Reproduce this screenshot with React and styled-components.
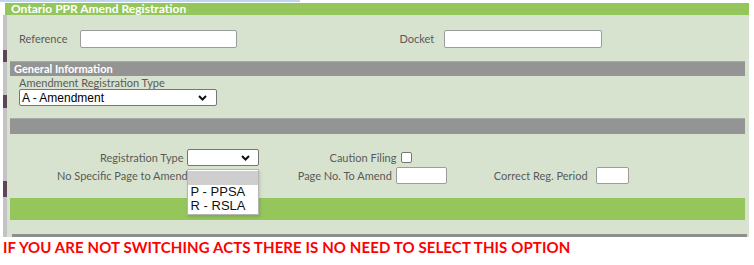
import React from 'react';
import styled, { createGlobalStyle } from 'styled-components';

const GlobalStyle = createGlobalStyle`
  body {
    margin: 0;
    background: #fff;
    font-family: Lato, "Open Sans", sans-serif;
  }
`

const Chevron = () => (
  <svg width="9" height="6" viewBox="0 0 9 6">
    <path d="M1 1 L4.5 4.5 L8 1" fill="none" stroke="#111" strokeWidth="2" />
  </svg>
)

const App = () => (
  <>
    <GlobalStyle />
    <TopLine />
    <Frame>
      <Header>Ontario PPR Amend Registration</Header>
      <Body>
        <Gutter />
        <Panel>
          <Row top="15px">
            <Field left="12px">
              <Label>Reference</Label>
              <TextInput width="157px" gap="13px" />
            </Field>
            <Field left="162px">
              <Label>Docket</Label>
              <TextInput width="158px" gap="10px" />
            </Field>
          </Row>

          <Bar top="13px">General Information</Bar>
          <Stacked>
            <Label>Amendment Registration Type</Label>
            <SelectBox width="198px">
              A - Amendment
              <Chevron />
            </SelectBox>
          </Stacked>

          <Bar top="12px" height="16px" />

          <Row top="15px">
            <Field left="93px">
              <Label>Registration Type</Label>
              <SelectWrap>
                <SelectBox width="72px" gap="3px" />
                <Chevron />
                <Popup>
                  <Option active>&nbsp;</Option>
                  <Option>P - PPSA</Option>
                  <Option>R - RSLA</Option>
                </Popup>
              </SelectWrap>
            </Field>
            <Field left="71px">
              <Label>Caution Filing</Label>
              <Check />
            </Field>
          </Row>
          <Row top="1px">
            <Field left="50px">
              <Label>No Specific Page to Amend</Label>
              <Check />
            </Field>
            <Field left="94px">
              <Label>Page No. To Amend</Label>
              <TextInput width="51px" height="17px" gap="4px" />
            </Field>
            <Field left="47px">
              <Label>Correct Reg. Period</Label>
              <TextInput width="33px" height="17px" gap="8px" />
            </Field>
          </Row>

          <GreenBar />
          <BottomLine />
        </Panel>
      </Body>
    </Frame>
    <Warning>IF YOU ARE NOT SWITCHING ACTS THERE IS NO NEED TO SELECT THIS OPTION</Warning>
  </>
);

const TopLine = styled.div`
    width: 300px;
    height: 2px;
    background: #bcd6f0;
    margin-bottom: 1px;
`
const Frame = styled.div`
    width: 746px;
    margin-left: 3px;
`
const Header = styled.div`
    margin-left: 2px;
    height: 12px;
    background: #95c65c;
    color: #fff;
    font-weight: 700;
    font-size: 12px;
    line-height: 12px;
    padding-left: 6px;
`
const Body = styled.div`
    display: flex;
`
const Gutter = styled.div`
    width: 4px;
    background: linear-gradient(
        to bottom,
        #c3c3c3 0, #c3c3c3 35px,
        #5d4655 35px, #5d4655 47px,
        #c3c3c3 47px, #c3c3c3 80px,
        #5d4655 80px, #5d4655 93px,
        #c3c3c3 93px, #c3c3c3 166px,
        #5d4655 166px, #5d4655 182px,
        #c3c3c3 182px
    );
`
const Panel = styled.div`
    flex: 1;
    background: #d8e3cf;
    padding: 0 4px 0 3px;
`
const Row = styled.div`
    display: flex;
    align-items: center;
    margin-top: ${props => props.top || '0'};
    margin-left: -3px;
`
const Field = styled.div`
    display: flex;
    align-items: center;
    margin-left: ${props => props.left || '0'};
`
const Label = styled.span`
    font-size: 11px;
    line-height: 12px;
    color: #5a5a5a;
    white-space: nowrap;
`
const TextInput = styled.div`
    box-sizing: border-box;
    width: ${props => props.width};
    height: ${props => props.height || '18px'};
    margin-left: ${props => props.gap || '0'};
    background: #fff;
    border: 1px solid #9c9c9c;
    border-radius: 2px;
`
const Bar = styled.div`
    margin-top: ${props => props.top || '0'};
    height: ${props => props.height || '15px'};
    background: #949494;
    color: #fff;
    font-size: 11px;
    font-weight: 700;
    line-height: 14px;
    padding-left: 4px;
    border-top: 1px solid #a9a9a3;
    box-sizing: border-box;
`
const Stacked = styled.div`
    display: flex;
    flex-direction: column;
    align-items: flex-start;
    padding-left: 9px;
    padding-top: 1px;
`
const SelectBox = styled.div`
    box-sizing: border-box;
    display: flex;
    align-items: center;
    justify-content: space-between;
    width: ${props => props.width};
    height: 17px;
    margin-left: ${props => props.gap || '0'};
    padding: 0 9px 0 2px;
    background: #fff;
    border: 1px solid #767676;
    border-radius: 2px;
    font-family: "Liberation Sans", Arial, sans-serif;
    font-size: 12px;
    color: #000;
`
const SelectWrap = styled.div`
    position: relative;
    display: flex;
    align-items: center;

    & > svg {
        position: absolute;
        right: 9px;
        top: 6px;
    }
`
const Popup = styled.div`
    position: absolute;
    top: 20px;
    left: 3px;
    width: 72px;
    box-sizing: border-box;
    padding: 1px 0;
    background: #fff;
    border: 1px solid #b5b5b5;
    box-shadow: 1px 2px 3px rgba(0, 0, 0, 0.15);
    z-index: 2;
`
const Option = styled.div`
    height: 14px;
    line-height: 14px;
    padding-left: 3px;
    font-family: "Liberation Sans", Arial, sans-serif;
    font-size: 13px;
    color: #111;
    background: ${props => (props.active ? '#cecece' : '#fff')};
`
const Check = styled.span`
    display: inline-block;
    box-sizing: border-box;
    width: 11px;
    height: 11px;
    margin-left: 5px;
    background: #fff;
    border: 1px solid #767676;
    border-radius: 2px;
`
const GreenBar = styled.div`
    margin-top: 14px;
    height: 22px;
    background: #95c65c;
`
const BottomLine = styled.div`
    margin: 14px -2px 0 2px;
    height: 3px;
    background: #8e8e8e;
`
const Warning = styled.div`
    margin-left: 3px;
    color: #ff0000;
    font-weight: 700;
    font-size: 15px;
    line-height: 20px;
    letter-spacing: 0.1px;
`

export default App;
